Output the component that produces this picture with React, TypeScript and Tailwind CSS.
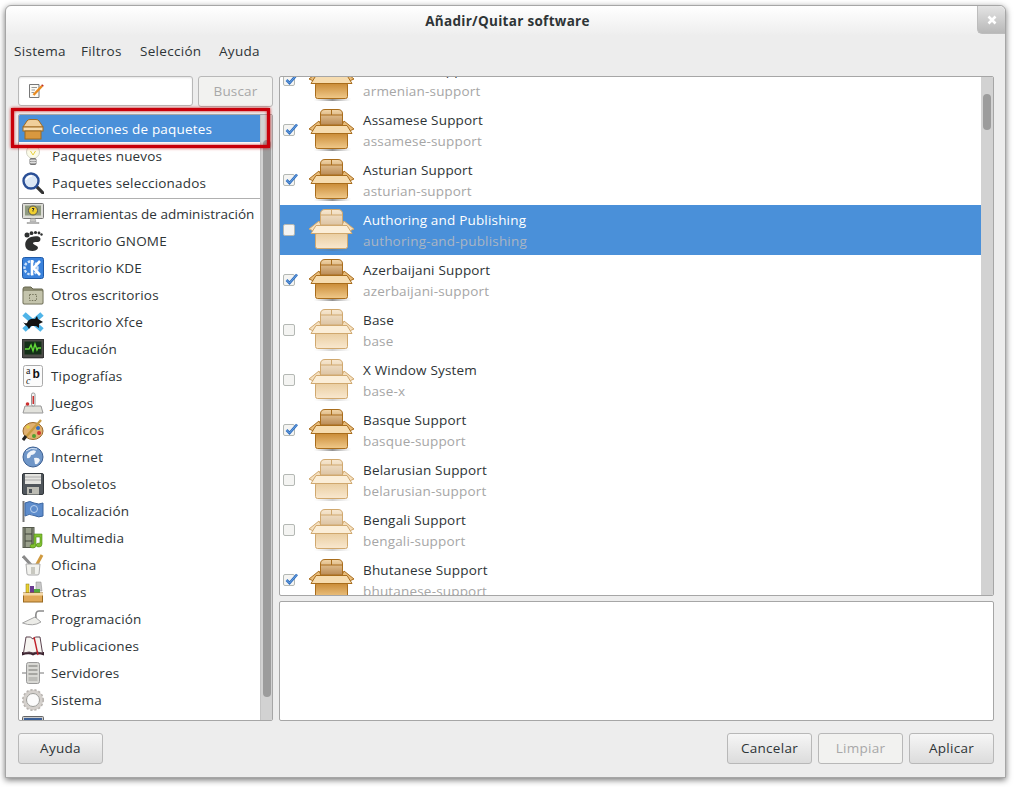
import React from 'react';

const FONT = "font-['Open_Sans','Noto_Sans',sans-serif]";

const PackageIcon: React.FC<{ faded?: boolean }> = ({ faded }) => {
  const line = faded ? '#d0a86e' : '#a96d1c';
  const lid = faded ? '#fbeed8' : '#f6dcb0';
  const flap = faded ? '#f5e0bf' : '#e8bd7c';
  const suffix = faded ? 'F' : 'N';
  return (
    <svg width="48" height="44" viewBox="0 0 48 44">
      <defs>
        <linearGradient id={`boxBody${suffix}`} x1="0" y1="0" x2="0" y2="1">
          <stop offset="0" stopColor={faded ? '#e9cda0' : '#c98a35'} />
          <stop offset="1" stopColor={faded ? '#f9e8cf' : '#f0c98a'} />
        </linearGradient>
        <linearGradient id={`boxInner${suffix}`} x1="0" y1="0" x2="0" y2="1">
          <stop offset="0" stopColor={faded ? '#f8e8d0' : '#f3d6a8'} />
          <stop offset="1" stopColor={faded ? '#dcc4a4' : '#b98a55'} />
        </linearGradient>
        <linearGradient id={`boxShadow${suffix}`} x1="0" y1="0" x2="1" y2="0">
          <stop offset="0" stopColor="#888" stopOpacity="0" />
          <stop offset="0.5" stopColor="#666" stopOpacity={faded ? 0.3 : 0.7} />
          <stop offset="1" stopColor="#888" stopOpacity="0" />
        </linearGradient>
      </defs>
      <rect x="6" y="40" width="37" height="3" fill={`url(#boxShadow${suffix})`} />
      <path d="M1 21 L11 13 L13 17 L8 24Z" fill={flap} stroke={line} />
      <path d="M46 21 L36 13 L34 17 L39 24Z" fill={flap} stroke={line} />
      <path d="M12.5 17 V6 Q12.5 1.5 17 1.5 H30 Q34.5 1.5 34.5 6 V17Z" fill={`url(#boxInner${suffix})`} stroke={line} />
      <path d="M23.5 2 V7 M13 7 H34" stroke={line} fill="none" />
      <rect x="7.5" y="25" width="32" height="15.5" rx="2" fill={`url(#boxBody${suffix})`} stroke={line} />
      <path d="M8 17.5 H39 L44 25.5 H3Z" fill={lid} stroke={line} />
    </svg>
  );
};

const Check: React.FC<{ checked?: boolean }> = ({ checked }) => (
  <span className="relative block h-3 w-3 rounded-[2px] border border-[#b4b8b4] bg-[#f4f4f2]">
    {checked && (
      <svg width="15" height="14" viewBox="0 0 15 14" className="absolute left-0 top-[-3px]">
        <path d="M2.5 8 L5.5 11 L13 2.5" fill="none" stroke="#2f6fc0" strokeWidth="2.6" />
        <path d="M2.5 8 L5.5 11 L13 2.5" fill="none" stroke="#7fb0e8" strokeWidth="0.8" />
      </svg>
    )}
  </span>
);

const SmallIcon: React.FC<{ name: string }> = ({ name }) => {
  let body: React.ReactNode = null;
  switch (name) {
    case 'box':
      body = (
        <>
          <path d="M1 9 L5 3 Q6 1.5 8 1.5 H14 Q16 1.5 17 3 L21 9Z" fill="#f0cf9b" stroke="#a06a20" />
          <rect x="1" y="9" width="20" height="4" fill="#f6dcb0" stroke="#a06a20" />
          <rect x="3" y="13" width="16" height="8" fill="#d9983f" stroke="#a06a20" />
        </>
      );
      break;
    case 'bulb':
      body = (
        <>
          <circle cx="11" cy="7" r="6.5" fill="#fbfbe8" stroke="#d2d2c4" />
          <path d="M8.5 6 L11 10 L13.5 6" stroke="#e8d040" fill="none" />
          <rect x="8" y="13.5" width="6" height="6" rx="1" fill="#a8a8a8" stroke="#777" />
          <path d="M8 15.5 H14 M8 17.5 H14" stroke="#ddd" />
        </>
      );
      break;
    case 'search':
      body = (
        <>
          <path d="M14 14 L21 21" stroke="#333" strokeWidth="3.2" strokeLinecap="round" />
          <circle cx="9" cy="9" r="7.5" fill="#dce8f6" stroke="#2a4f96" strokeWidth="2.4" />
          <path d="M4 8 Q6 4 10 4" stroke="#fff" strokeWidth="1.5" fill="none" />
        </>
      );
      break;
    case 'admin':
      body = (
        <>
          <rect x="0.5" y="0.5" width="21" height="15" rx="1" fill="#dcdcd6" stroke="#777" />
          <rect x="3" y="2.5" width="16" height="10" fill="#8f9a80" />
          <circle cx="11" cy="7.5" r="4.5" fill="#f0d030" stroke="#555" />
          <path d="M10 5.5 H12 L11 7.5 V8.5" stroke="#333" fill="none" />
          <path d="M9 15.5 H13 L14 18.5 H8Z M5 19.5 H17 V20.5 H5Z" fill="#c8c8c4" stroke="#888" strokeWidth="0.5" />
        </>
      );
      break;
    case 'foot':
      body = (
        <>
          <path d="M9 7 C16 5 20 7 18 11 C16 13 12 11 11 13 C11 15 16 15 16 18 C15 22 6 22 4 18 C2 13 4 9 9 7Z" fill="#2e3030" />
          <circle cx="5" cy="5" r="2.5" fill="#2e3030" />
          <circle cx="9.5" cy="3.2" r="1.9" fill="#2e3030" />
          <circle cx="13.5" cy="2.5" r="1.6" fill="#2e3030" />
          <circle cx="17" cy="3" r="1.4" fill="#2e3030" />
          <circle cx="19.5" cy="4.5" r="1.2" fill="#2e3030" />
        </>
      );
      break;
    case 'kde':
      body = (
        <>
          <rect x="0.5" y="0.5" width="21" height="21" rx="2" fill="#3a82dc" stroke="#1f5aa8" />
          <circle cx="9" cy="11" r="6.5" fill="none" stroke="#cfe3fa" strokeWidth="2.4" strokeDasharray="2.4 1.4" />
          <path d="M10 3 V18 M18 4 L11.5 11 L18 18" stroke="#fff" strokeWidth="2.6" fill="none" />
        </>
      );
      break;
    case 'folder':
      body = (
        <>
          <path d="M1 5 Q1 3 3 3 H9 L11 5 H20 Q21 5 21 7 V19 Q21 20 20 20 H2 Q1 20 1 19Z" fill="#8c8c72" stroke="#66664e" />
          <rect x="1.5" y="7" width="19" height="12.5" rx="1" fill="#c4c4ac" />
          <rect x="7.5" y="10.5" width="7" height="6" fill="none" stroke="#77775f" strokeDasharray="1.5 1.2" />
        </>
      );
      break;
    case 'xfce':
      body = (
        <>
          <path d="M2 3 L20 19 M20 3 L2 19" stroke="#4fb4e8" strokeWidth="5" />
          <path d="M1 11 Q3 13 5 12 Q7 7 13 8 L15 5 L16 8 L21 11 L17 13 L17 17 L14 15 L9 15 L7 18 L5 15 Q3 14 1 11Z" fill="#111" />
        </>
      );
      break;
    case 'chart':
      body = (
        <>
          <rect x="0.5" y="1.5" width="21" height="18" fill="#4c4c48" stroke="#333" />
          <rect x="2.5" y="3.5" width="17" height="13" fill="#143018" />
          <path d="M3 11 H7 L9 7 L11 13 L13 6 L15 12 L16 10 H19" stroke="#62d838" fill="none" strokeWidth="1.4" />
          <rect x="1" y="20" width="20" height="1" fill="#bbb" />
        </>
      );
      break;
    case 'font':
      body = (
        <>
          <rect x="1.5" y="0.5" width="19" height="21" rx="2" fill="#fbfbfb" stroke="#aaa" />
          <text x="4" y="9" fontSize="10" fontFamily="Liberation Serif" fill="#222">a</text>
          <text x="10.5" y="13" fontSize="12" fontWeight="700" fontFamily="Liberation Sans" fill="#111">b</text>
          <text x="4" y="19" fontSize="10" fontStyle="italic" fontFamily="Liberation Serif" fill="#222">c</text>
        </>
      );
      break;
    case 'joystick':
      body = (
        <>
          <path d="M3 14 H19 L21 21 H1Z" fill="#e2e2dc" stroke="#999" />
          <rect x="9.5" y="1" width="3.5" height="13" rx="1.5" fill="#f2f2f2" stroke="#999" />
          <rect x="10.5" y="4" width="1.5" height="8" fill="#cc3030" />
          <circle cx="5.5" cy="12" r="1.8" fill="#cc3030" />
        </>
      );
      break;
    case 'palette':
      body = (
        <>
          <ellipse cx="11" cy="12" rx="10" ry="8.5" fill="#e0b070" stroke="#9a6a2a" />
          <circle cx="6" cy="8" r="1.8" fill="#e8d040" />
          <circle cx="16" cy="9" r="2" fill="#3070c8" />
          <circle cx="17" cy="14" r="2" fill="#d03030" />
          <circle cx="12" cy="17" r="2" fill="#50a030" />
          <path d="M3 19 L19 1" stroke="#c89a40" strokeWidth="2.4" />
          <path d="M1 21 L4 17" stroke="#222" strokeWidth="3" />
        </>
      );
      break;
    case 'globe':
      body = (
        <>
          <circle cx="11" cy="11" r="10" fill="#6f96c8" stroke="#3c5f92" />
          <path d="M6 7 Q10 3 14 5 Q13 9 9 9 Q8 13 5 12 Q4 9 6 7Z M12 12 Q17 11 18 14 Q16 19 13 18Z" fill="#f0f4fa" />
          <path d="M4 5 Q9 1 15 3" stroke="#dbe7f5" fill="none" />
        </>
      );
      break;
    case 'floppy':
      body = (
        <>
          <rect x="0.5" y="0.5" width="21" height="21" rx="1.5" fill="#50565c" stroke="#33383c" />
          <rect x="3" y="1" width="16" height="10" fill="#e4e4e0" />
          <path d="M3 4 H19 M3 7 H19" stroke="#aaa" />
          <rect x="5" y="14" width="12" height="7.5" fill="#bcbcb4" />
          <rect x="7" y="16" width="3" height="4" fill="#50565c" />
        </>
      );
      break;
    case 'flag':
      body = (
        <>
          <rect x="0.5" y="1" width="2" height="21" fill="#777" />
          <path d="M3 3 Q8 0 12 3 Q17 5 21 3 V16 Q17 18 12 15.5 Q7 13 3 16Z" fill="#5d8ccc" stroke="#3c66a0" />
          <circle cx="12" cy="9" r="3.5" fill="none" stroke="#bcd3f0" />
        </>
      );
      break;
    case 'media':
      body = (
        <>
          <rect x="1" y="0.5" width="11" height="20" fill="#9aa08c" stroke="#55594c" />
          <path d="M3 1 V20 M10 1 V20 M3 7 H10 M3 14 H10" stroke="#40443a" />
          <path d="M12 7 H20 V17 Q20 20 17 20 Q14 20 14 18 Q14 16 18 16 V10 H14 V18 Q14 21 11 21 Q8 21 8 19 Q8 17 12 17Z" fill="#80c030" stroke="#4f8a18" strokeWidth="0.6" />
        </>
      );
      break;
    case 'office':
      body = (
        <>
          <path d="M1 2 L10 12" stroke="#8a8a8a" strokeWidth="3" />
          <path d="M20 1 L14 12" stroke="#d09a40" strokeWidth="3" />
          <path d="M4 10 H18 L17 20 Q17 21 15 21 H7 Q5 21 5 20Z" fill="#f2f2ee" stroke="#aaa" />
          <rect x="9" y="13" width="4" height="7" fill="#c8c8c0" />
        </>
      );
      break;
    case 'other':
      body = (
        <>
          <rect x="4" y="3" width="3" height="9" fill="#e8d030" stroke="#8a7a10" strokeWidth="0.5" />
          <rect x="8" y="5" width="4" height="8" fill="#6a3a90" />
          <path d="M14 1 H19 L20 10 H14Z" fill="#c8c8c8" stroke="#888" strokeWidth="0.5" />
          <rect x="12" y="8" width="6" height="5" fill="#50a840" />
          <rect x="1.5" y="12" width="19" height="9" fill="#e0a858" stroke="#9a6a20" />
          <rect x="1" y="12" width="20" height="2.5" fill="#f3d8a8" />
        </>
      );
      break;
    case 'trowel':
      body = (
        <>
          <path d="M0.5 15 L13 9 L19 14 Q11 19 0.5 15Z" fill="#ececE8" stroke="#a4a4a4" />
          <path d="M14 10 Q13 3 17 3 H22" stroke="#8a8a8a" strokeWidth="1.6" fill="none" />
        </>
      );
      break;
    case 'book':
      body = (
        <>
          <path d="M0 20.5 Q7 18 11 20.5 Q15 18 22 20.5 V17 H0Z" fill="#3c2430" />
          <path d="M1.5 18 L4 2 Q9 1 11 4 Q13 1 18 2 L20.5 18 Q14 16 11 18 Q8 16 1.5 18Z" fill="#f6f4f0" stroke="#5c4450" />
          <path d="M12 2 L16 20" stroke="#c02028" strokeWidth="1.4" />
        </>
      );
      break;
    case 'server':
      body = (
        <>
          <path d="M0 11 H22" stroke="#777" />
          <rect x="4.5" y="0.5" width="13" height="21" rx="2" fill="#d8d8d4" stroke="#999" />
          <rect x="6.5" y="3" width="9" height="2" fill="#a6a6a2" />
          <rect x="6.5" y="7" width="9" height="2" fill="#a6a6a2" />
          <rect x="6.5" y="11" width="9" height="2" fill="#a6a6a2" />
          <rect x="6.5" y="15" width="9" height="4" fill="#bcbcb8" />
        </>
      );
      break;
    case 'gear':
      body = (
        <>
          <circle cx="11" cy="11" r="8.5" fill="none" stroke="#d4d0cc" strokeWidth="3.4" />
          <circle cx="11" cy="11" r="10.2" fill="none" stroke="#b8b4b0" strokeWidth="1.6" strokeDasharray="2.2 1.9" />
          <circle cx="11" cy="11" r="6.5" fill="#fbfbfb" stroke="#9a9a96" />
        </>
      );
      break;
    case 'monitor':
      body = (
        <>
          <rect x="0.5" y="0.5" width="21" height="16" rx="1" fill="#ccc" stroke="#666" />
          <rect x="2" y="2" width="18" height="13" fill="#3b5f96" />
        </>
      );
      break;
  }
  return (
    <svg width="22" height="22" viewBox="0 0 22 22" className="shrink-0">
      {body}
    </svg>
  );
};

const SideRow: React.FC<{ icon: string; label?: string; selected?: boolean; top?: boolean; tight?: boolean }> = ({
  icon,
  label,
  selected,
  top,
  tight,
}) => (
  <div
    className={`flex h-[27px] shrink-0 items-center pl-[3px] ${top ? 'gap-[8px]' : 'gap-[7px]'} ${
      selected ? 'bg-[#4a90d9] text-white' : 'text-[#2e3436]'
    }`}
  >
    <SmallIcon name={icon} />
    {label && <span className={`whitespace-nowrap pt-[2px] ${tight ? 'tracking-[0px]' : ''}`}>{label}</span>}
  </div>
);

const Btn: React.FC<{ label: string; disabled?: boolean; className?: string }> = ({ label, disabled, className }) => (
  <button
    className={`flex h-[31px] items-center justify-center rounded-[3px] border border-[#b8b8b8] ${
      disabled
        ? 'bg-[#f2f2f0] text-[#a8a8a8]'
        : 'bg-gradient-to-b from-[#f6f6f6] to-[#dcdcdc] text-[#2e3436]'
    } ${className ?? ''}`}
  >
    {label}
  </button>
);

const topRows = [
  { icon: 'box', label: 'Colecciones de paquetes', selected: true },
  { icon: 'bulb', label: 'Paquetes nuevos' },
  { icon: 'search', label: 'Paquetes seleccionados' },
];

const categories = [
  { icon: 'admin', label: 'Herramientas de administración', tight: true },
  { icon: 'foot', label: 'Escritorio GNOME' },
  { icon: 'kde', label: 'Escritorio KDE' },
  { icon: 'folder', label: 'Otros escritorios' },
  { icon: 'xfce', label: 'Escritorio Xfce' },
  { icon: 'chart', label: 'Educación' },
  { icon: 'font', label: 'Tipografías' },
  { icon: 'joystick', label: 'Juegos' },
  { icon: 'palette', label: 'Gráficos' },
  { icon: 'globe', label: 'Internet' },
  { icon: 'floppy', label: 'Obsoletos' },
  { icon: 'flag', label: 'Localización' },
  { icon: 'media', label: 'Multimedia' },
  { icon: 'office', label: 'Oficina' },
  { icon: 'other', label: 'Otras' },
  { icon: 'trowel', label: 'Programación' },
  { icon: 'book', label: 'Publicaciones' },
  { icon: 'server', label: 'Servidores' },
  { icon: 'gear', label: 'Sistema' },
  { icon: 'monitor' },
];

const packages = [
  { name: 'Armenian Support', id: 'armenian-support', checked: true },
  { name: 'Assamese Support', id: 'assamese-support', checked: true },
  { name: 'Asturian Support', id: 'asturian-support', checked: true },
  { name: 'Authoring and Publishing', id: 'authoring-and-publishing', selected: true },
  { name: 'Azerbaijani Support', id: 'azerbaijani-support', checked: true },
  { name: 'Base', id: 'base' },
  { name: 'X Window System', id: 'base-x' },
  { name: 'Basque Support', id: 'basque-support', checked: true },
  { name: 'Belarusian Support', id: 'belarusian-support' },
  { name: 'Bengali Support', id: 'bengali-support' },
  { name: 'Bhutanese Support', id: 'bhutanese-support', checked: true },
];

export default function App() {
  return (
    <div className={`${FONT} h-[787px] w-[1016px] overflow-hidden bg-white pl-[5px] pt-[5px] text-[13.5px] tracking-[0.18px]`}>
      <div className="relative flex h-[773px] w-[1001px] flex-col rounded-t-[6px] border border-[#a6a6a6] bg-[#ededed] shadow-[0_2px_6px_rgba(0,0,0,0.55)]">
        {/* title */}
        <div className="relative flex h-[30px] shrink-0 items-center justify-center rounded-t-[6px] bg-gradient-to-b from-white to-[#ededed] pl-[4px] font-bold tracking-[0.3px] text-[#2e3436]">
          Añadir/Quitar software
          <div className="absolute right-0 top-0 flex h-[28px] w-[28px] items-center justify-center rounded-bl-[5px] rounded-tr-[6px] border-b border-l border-[#bdbdbd] bg-gradient-to-b from-[#e4e4e4] to-[#b8b8b8]">
            <svg width="10" height="10" viewBox="0 0 10 10">
              <path d="M1.5 1.5 L8.5 8.5 M8.5 1.5 L1.5 8.5" stroke="#fff" strokeWidth="2.6" />
            </svg>
          </div>
        </div>

        {/* menu */}
        <div className="flex h-[30px] shrink-0 items-center pl-[8px] tracking-[0.3px] text-[#2e3436]">
          <span className="w-[67px]">Sistema</span>
          <span className="w-[59px]">Filtros</span>
          <span className="w-[79px]">Selección</span>
          <span>Ayuda</span>
        </div>

        {/* body */}
        <div className="mt-[10px] flex h-[645px] shrink-0 gap-[6px] pl-[12px] pr-[11px]">
          <div className="flex w-[255px] shrink-0 flex-col">
            <div className="flex h-[30px] shrink-0 gap-[5px]">
              <div className="flex w-[175px] items-center rounded-[3px] border border-[#b8b8b8] bg-white pl-[9px] shadow-[inset_0_1px_2px_rgba(0,0,0,0.1)]">
                <svg width="16" height="16" viewBox="0 0 16 16">
                  <path d="M1.5 1.5 H11 V14.5 H1.5Z" fill="#fbfbf6" stroke="#777" />
                  <path d="M3.5 4.5 H9 M3.5 7 H7 M3.5 9.5 H6" stroke="#999" />
                  <path d="M5.5 12 L14 3" stroke="#e88a20" strokeWidth="2.4" />
                  <path d="M14 3 L15 2" stroke="#c03020" strokeWidth="2.4" />
                </svg>
              </div>
              <Btn label="Buscar" disabled className="h-[30px] w-[75px]" />
            </div>

            <div className="mt-[8px] flex min-h-0 flex-1 overflow-hidden rounded-[2px] border border-[#a6a6a6] bg-white">
              <div className="flex min-w-0 flex-1 flex-col overflow-hidden">
                {topRows.map(r => (
                  <SideRow key={r.label} icon={r.icon} label={r.label} selected={r.selected} top />
                ))}
                <div className="my-[1px] flex h-[2px] shrink-0 gap-[1px] border-b border-[#b0b0b0]" />
                {categories.map(r => (
                  <SideRow key={r.icon} icon={r.icon} label={r.label} tight={r.tight} />
                ))}
              </div>
              <div className="flex w-[12px] shrink-0 justify-center border-l border-[#c4c4c4] bg-[#d2d2d2] pt-[25px]">
                <div className="h-[557px] w-[8px] rounded-[4px] bg-[#9c9c9c]" />
              </div>
            </div>
          </div>

          <div className="flex min-w-0 flex-1 flex-col">
            <div className="flex h-[520px] shrink-0 overflow-hidden rounded-[2px] border border-[#a6a6a6] bg-white">
              <div className="min-w-0 flex-1 overflow-hidden">
                <div className="mt-[-22px]">
                  {packages.map(p => (
                    <div
                      key={p.id}
                      className={`flex h-[50px] items-center ${p.selected ? 'bg-[#4a90d9]' : ''}`}
                    >
                      <div className="ml-[3px] w-[25px] shrink-0">
                        <Check checked={p.checked} />
                      </div>
                      <PackageIcon faded={!p.checked} />
                      <div className="ml-[7px] flex flex-col gap-[3px] leading-[18px]">
                        <span className={p.selected ? 'text-white' : 'text-[#2e3436]'}>{p.name}</span>
                        <span className={p.selected ? 'text-[#a9b5c4]' : 'text-[#a6a6a6]'}>{p.id}</span>
                      </div>
                    </div>
                  ))}
                </div>
              </div>
              <div className="flex w-[12px] shrink-0 justify-center bg-[#d2d2d2] pt-[17px]">
                <div className="h-[36px] w-[8px] rounded-[4px] bg-[#9c9c9c]" />
              </div>
            </div>
            <div className="mt-[5px] flex-1 rounded-[2px] border border-[#a6a6a6] bg-white" />
          </div>
        </div>

        {/* buttons */}
        <div className="mt-[12px] flex shrink-0 justify-between pl-[12px] pr-[11px] tracking-[0.3px]">
          <Btn label="Ayuda" className="w-[85px]" />
          <div className="flex gap-[6px]">
            <Btn label="Cancelar" className="w-[85px]" />
            <Btn label="Limpiar" disabled className="w-[85px]" />
            <Btn label="Aplicar" className="w-[85px]" />
          </div>
        </div>

        {/* annotation over the selected category */}
        <div className="pointer-events-none absolute left-[5px] top-[102px] h-[40px] w-[259px] border-[3px] border-[#c8000a] shadow-[0_0_3px_rgba(200,0,0,0.9),inset_0_0_3px_rgba(200,0,0,0.9)]" />
      </div>
    </div>
  );
}
